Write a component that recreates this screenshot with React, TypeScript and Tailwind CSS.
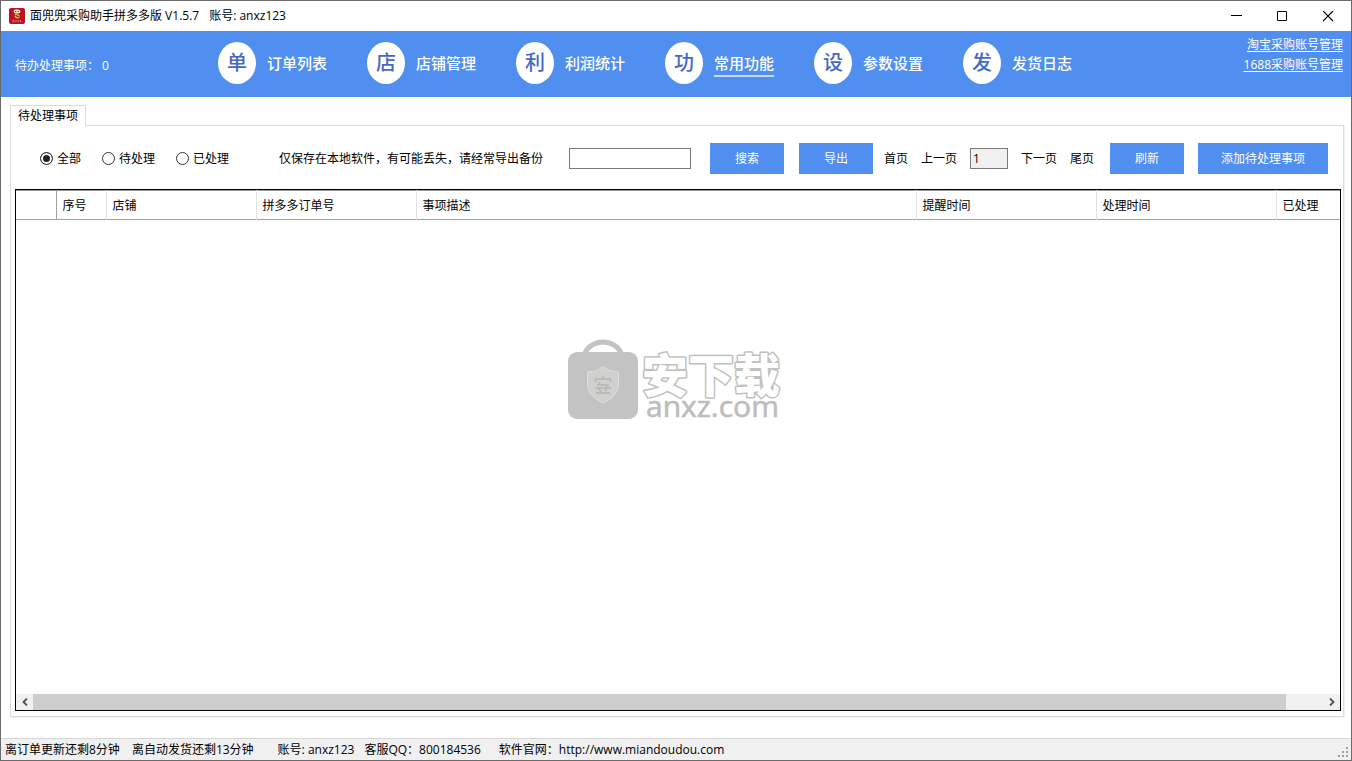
import React, { useState } from 'react';
import clsx from 'clsx';

const navItems = [
  { mark: '单', label: '订单列表' },
  { mark: '店', label: '店铺管理' },
  { mark: '利', label: '利润统计' },
  { mark: '功', label: '常用功能' },
  { mark: '设', label: '参数设置' },
  { mark: '发', label: '发货日志' },
];

const filters = ['全部', '待处理', '已处理'];

const columns = [
  { title: '', width: 'w-[40px]' },
  { title: '序号', width: 'w-[50px]' },
  { title: '店铺', width: 'w-[150px]' },
  { title: '拼多多订单号', width: 'w-[160px]' },
  { title: '事项描述', width: 'w-[500px]' },
  { title: '提醒时间', width: 'w-[180px]' },
  { title: '处理时间', width: 'w-[180px]' },
  { title: '已处理', width: '' },
];

const AppIcon = () => (
  <svg className="w-4 h-4 shrink-0" viewBox="0 0 16 16" aria-hidden="true">
    <rect width="16" height="16" rx="2" fill="#b91322" />
    <path d="M4.6 3 Q5.4 1 8.2 1.4 Q11 1.2 11.4 3.2 Q11.600 5.200 9.800 5.600 H6.400 Q4.400 5.200 4.600 3 Z" fill="#f7e9d8" />
    <circle cx="6.8" cy="3.6" r=".7" fill="#3a1512" />
    <circle cx="9.2" cy="3.6" r=".7" fill="#3a1512" />
    <path d="M6.2 6 Q9 5.600 10.600 7.200 Q11.200 9.800 8.600 10.600 Q6 10.600 5.400 8.600 Z" fill="#e8ad42" />
    <path d="M6.600 7.400 L9.600 8.800" stroke="#5b1d12" strokeWidth="1.100" />
    <path d="M3.5 12.2 H5.5 M3.5 13.8 H5.5 M7 12 V14 M8.6 12.2 H9.8 M8.6 13.8 H9.8 M11.4 12 V14 M12.6 13.4 H13" stroke="#e58a86" strokeWidth=".9" />
  </svg>
);

const Watermark = () => (
  <svg className="w-[220px] h-[90px]" viewBox="0 0 220 90" role="img" aria-label="安下载 anxz.com">
    <path d="M18 18 A19.5 18 0 0 1 54 18" fill="none" stroke="#c3c3c3" strokeWidth="5" />
    <rect x="1" y="17" width="70" height="67" rx="9" fill="#c3c3c3" />
    <path d="M36 32 Q43 37 51.5 37 V49 Q51.5 61 36 68 Q20.500 61 20.500 49 V37 Q29 37 36 32 Z" fill="#d0d0ce" stroke="#dededb" strokeWidth="1" />
    <path d="M36 41 V44 M28.500 47 V44 H43.500 V47 M30 50 H42 M28 53 H44 M33 47 L31.500 50 M40 50 L38.500 56 M31.500 53 L34 57 M29 58 H43" fill="none" stroke="#b4b4b2" strokeWidth="1.500" />
    <text
      x="75"
      y="57"
      fontSize="46"
      fontWeight="900"
      fill="#fff"
      stroke="#c0c0c0"
      strokeWidth="3"
      strokeLinejoin="round"
      paintOrder="stroke"
      className="font-['Noto_Sans_CJK_SC',sans-serif]"
    >
      安下载
    </text>
    <text x="79" y="82" fontSize="30" fill="#bdbdbd" stroke="#bdbdbd" strokeWidth=".6" className="font-['Open_Sans',sans-serif]">
      anxz.com
    </text>
  </svg>
);

const TitleBar = () => (
  <header className="flex items-center justify-between h-[30px] pl-2 bg-white">
    <div className="flex items-center gap-[5px]">
      <AppIcon />
      <h1 className="flex gap-[10px]">
        <span>面兜兜采购助手拼多多版 V1.5.7</span>
        <span>账号: anxz123</span>
      </h1>
    </div>
    <div className="flex">
      <button aria-label="最小化" className="flex items-center justify-center w-[46px] h-[30px]">
        <svg className="w-[11px] h-[11px]" viewBox="0 0 11 11"><path d="M0 4.500 H11" stroke="#000" /></svg>
      </button>
      <button aria-label="最大化" className="flex items-center justify-center w-[46px] h-[30px]">
        <svg className="w-[11px] h-[11px]" viewBox="0 0 11 11"><path d="M.5 .5 H9.500 V9.500 H.5 Z" fill="none" stroke="#000" /></svg>
      </button>
      <button aria-label="关闭" className="flex items-center justify-center w-[46px] h-[30px]">
        <svg className="w-[11px] h-[11px]" viewBox="0 0 11 11"><path d="M0 0 L10 10 M10 0 L0 10" stroke="#000" strokeWidth="1.200" /></svg>
      </button>
    </div>
  </header>
);

const NavBar = () => {
  const [active, setActive] = useState('常用功能');

  return (
    <nav className="flex h-[66px] bg-[#508fef] text-white">
      <div className="w-[217px] shrink-0 pl-[14px] pt-[25px]">待办处理事项： 0</div>
      <div className="flex items-start gap-10 pt-[11px]">
        {navItems.map((item) => (
          <button key={item.label} onClick={() => setActive(item.label)} className="flex items-center gap-[11px]">
            <span className="flex items-center justify-center w-[38px] h-[42px] rounded-[50%] bg-white text-[#4667c4] text-xl leading-5 font-medium">
              {item.mark}
            </span>
            <span
              className={clsx(
                'text-[15px] leading-6 font-medium border-y-2 border-t-transparent',
                active === item.label ? 'border-b-[#c5dafa]' : 'border-b-transparent'
              )}
            >
              {item.label}
            </span>
          </button>
        ))}
      </div>
      <div className="flex flex-col items-end ml-auto pt-1 pr-2 leading-5 underline underline-offset-2">
        <a href="#taobao">淘宝采购账号管理</a>
        <a href="#1688">1688采购账号管理</a>
      </div>
    </nav>
  );
};

const Toolbar = () => {
  const [filter, setFilter] = useState('全部');
  const blueButton = 'h-[31px] bg-[#508fef] text-white';

  return (
    <div className="flex items-center h-[63px] pl-[29px] pr-[15px] pt-0.5 whitespace-nowrap">
      <div className="flex items-center gap-[21px]">
        {filters.map((name) => (
          <label key={name} className="flex items-center gap-1">
            <input
              type="radio"
              name="filter"
              checked={filter === name}
              onChange={() => setFilter(name)}
              className="appearance-none w-[13px] h-[13px] rounded-full border border-[#333] bg-white checked:bg-[#222] checked:shadow-[inset_0_0_0_2px_#fff]"
            />
            {name}
          </label>
        ))}
      </div>
      <label htmlFor="keyword" className="ml-[50px]">仅保存在本地软件，有可能丢失，请经常导出备份</label>
      <input id="keyword" type="text" className="w-[122px] h-[21px] ml-[26px] px-1 border border-[#7a7a7a] bg-white outline-none" />
      <button className={clsx(blueButton, 'w-[74px] ml-[19px]')}>搜索</button>
      <button className={clsx(blueButton, 'w-[74px] ml-[15px]')}>导出</button>
      <div className="flex items-center gap-[13px] ml-[11px]">
        <button>首页</button>
        <button>上一页</button>
        <input aria-label="页码" type="text" defaultValue="1" className="w-[38px] h-[21px] px-0.5 border border-[#7a7a7a] bg-[#f0f0f0] outline-none" />
        <button>下一页</button>
        <button>尾页</button>
      </div>
      <button className={clsx(blueButton, 'w-[74px] ml-auto')}>刷新</button>
      <button className={clsx(blueButton, 'w-[130px] ml-[14px]')}>添加待处理事项</button>
    </div>
  );
};

const ItemTable = () => (
  <div className="relative flex flex-col flex-1 ml-1 mr-0.5 mb-[5px] border border-black bg-white">
    <table className="w-full table-fixed border-t border-[#a0a0a0]">
      <thead>
        <tr className="h-[29px] border-b border-[#a0a0a0]">
          {columns.map((col, i) => (
            <th
              key={i}
              scope="col"
              className={clsx(
                'pl-[6px] pt-px text-left font-normal border-r last:border-r-0',
                i === 0 ? 'border-[#a0a0a0]' : 'border-[#e2e2e2]',
                col.width
              )}
            >
              {col.title}
            </th>
          ))}
        </tr>
      </thead>
      <tbody />
    </table>

    <div className="absolute inset-0 flex items-center justify-center pointer-events-none pb-[141px] pr-0.5">
      <Watermark />
    </div>

    {/* horizontal scrollbar */}
    <div className="flex h-4 mt-auto bg-[#f0f0f0]">
      <button aria-label="向左滚动" className="flex items-center justify-center w-[17px]">
        <svg className="w-2 h-2" viewBox="0 0 8 8"><path d="M6 .5 L2.500 4 L6 7.500" fill="none" stroke="#505050" strokeWidth="1.800" /></svg>
      </button>
      <div className="flex-1 mr-[37px] bg-[#cdcdcd]" />
      <button aria-label="向右滚动" className="flex items-center justify-center w-[17px]">
        <svg className="w-2 h-2" viewBox="0 0 8 8"><path d="M2 .5 L5.500 4 L2 7.500" fill="none" stroke="#505050" strokeWidth="1.800" /></svg>
      </button>
    </div>
  </div>
);

const StatusBar = () => (
  <footer className="flex items-center h-[22px] pl-1 bg-[#f0f0f0] border-t border-[#d7d7d7] whitespace-nowrap">
    <span>离订单更新还剩8分钟</span>
    <span className="ml-3">离自动发货还剩13分钟</span>
    <span className="ml-6">账号: anxz123</span>
    <span className="ml-[10px]">客服QQ：800184536</span>
    <span className="ml-[18px]">软件官网：http://www.miandoudou.com</span>
    <svg className="w-3 h-3 ml-auto mr-0.5 mt-auto mb-0.5" viewBox="0 0 12 12" fill="#a0a0a0" aria-hidden="true">
      <path d="M9 1h2v2H9z M5 5h2v2H5z M9 5h2v2H9z M1 9h2v2H1z M5 9h2v2H5z M9 9h2v2H9z" />
    </svg>
  </footer>
);

export default function App() {
  return (
    <div className="flex flex-col min-h-screen border border-[#6b6b6b] bg-white text-black text-xs leading-5 font-['Open_Sans','Noto_Sans_CJK_SC',sans-serif]">
      <TitleBar />
      <NavBar />
      <main className="flex flex-col flex-1 pt-2 pb-[21px] pl-[9px] pr-[7px]">
        <div role="tablist" className="flex">
          <button role="tab" aria-selected="true" className="relative h-[21px] px-[7px] -mb-px border border-b-0 border-[#dcdcdc] bg-white">
            待处理事项
          </button>
        </div>
        <section className="flex flex-col flex-1 border border-[#dcdcdc] shadow-[1px_1px_0_#f0f0f0]">
          <Toolbar />
          <ItemTable />
        </section>
      </main>
      <StatusBar />
    </div>
  );
}
